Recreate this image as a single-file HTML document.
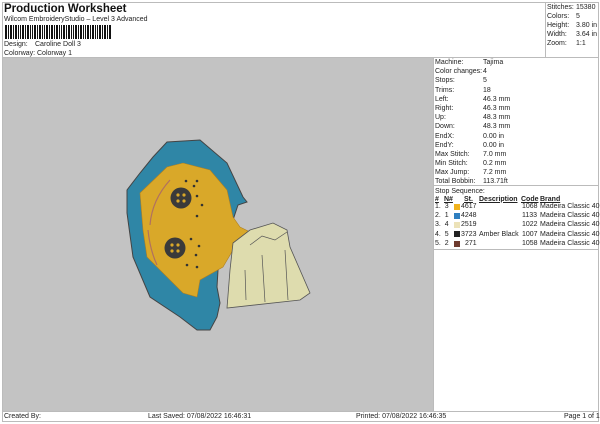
<!DOCTYPE html>
<html><head><meta charset="utf-8"><style>
*{margin:0;padding:0;box-sizing:border-box}
body{width:600px;height:424px;background:#fff;font-family:"Liberation Sans",Arial,sans-serif;color:#222;position:relative;overflow:hidden;font-size:7px}
.a{position:absolute;white-space:nowrap;line-height:9px}
.ln{position:absolute;background:#bbb}
</style></head><body>
<div class="ln" style="left:2px;top:2px;width:597px;height:1px"></div>
<div class="ln" style="left:2px;top:2px;width:1px;height:420px"></div>
<div class="ln" style="left:598px;top:2px;width:1px;height:420px"></div>
<div class="ln" style="left:2px;top:421px;width:597px;height:1px"></div>
<div class="ln" style="left:545px;top:2px;width:1px;height:55px"></div>
<div class="ln" style="left:2px;top:57px;width:597px;height:1px"></div>
<div class="ln" style="left:2px;top:411px;width:597px;height:1px"></div>
<div class="ln" style="left:433px;top:57px;width:1px;height:354px"></div>
<div class="ln" style="left:433px;top:185px;width:166px;height:1px"></div>
<div class="ln" style="left:433px;top:249px;width:166px;height:1px"></div>

<div class="a" style="left:4px;top:2px;font-size:11.5px;font-weight:bold;line-height:14px;color:#111">Production Worksheet</div>
<div class="a" style="left:4px;top:15px">Wilcom EmbroideryStudio – Level 3 Advanced</div>
<svg style="position:absolute;left:5px;top:25px" width="106" height="14">
<path fill="#111" d="M0 0h2v14H0zM3 0h1v14H3zM5 0h2v14H5zM8 0h1v14H8zM10 0h2v14h-2zM13 0h1v14h-1zM15 0h1v14h-1zM17 0h2v14h-2zM20 0h1v14h-1zM22 0h2v14h-2zM25 0h1v14h-1zM27 0h1v14h-1zM29 0h2v14h-2zM32 0h1v14h-1zM34 0h2v14h-2zM37 0h1v14h-1zM39 0h1v14h-1zM41 0h2v14h-2zM44 0h1v14h-1zM46 0h2v14h-2zM49 0h1v14h-1zM51 0h2v14h-2zM54 0h1v14h-1zM56 0h1v14h-1zM58 0h2v14h-2zM61 0h1v14h-1zM63 0h2v14h-2zM66 0h1v14h-1zM68 0h1v14h-1zM70 0h2v14h-2zM73 0h1v14h-1zM75 0h2v14h-2zM78 0h1v14h-1zM80 0h1v14h-1zM82 0h2v14h-2zM85 0h1v14h-1zM87 0h2v14h-2zM90 0h1v14h-1zM92 0h1v14h-1zM94 0h2v14h-2zM97 0h1v14h-1zM99 0h2v14h-2zM102 0h1v14h-1zM104 0h2v14h-2z"/>
</svg>
<div class="a" style="left:4px;top:40px">Design:</div><div class="a" style="left:35px;top:40px">Caroline Doll 3</div>
<div class="a" style="left:4px;top:49px">Colorway:</div><div class="a" style="left:37px;top:49px">Colorway 1</div>

<div class="a" style="left:547px;top:3px">Stitches:</div><div class="a" style="left:576px;top:3px">15380</div>
<div class="a" style="left:547px;top:12px">Colors:</div><div class="a" style="left:576px;top:12px">5</div>
<div class="a" style="left:547px;top:21px">Height:</div><div class="a" style="left:576px;top:21px">3.80 in</div>
<div class="a" style="left:547px;top:30px">Width:</div><div class="a" style="left:576px;top:30px">3.64 in</div>
<div class="a" style="left:547px;top:39px">Zoom:</div><div class="a" style="left:576px;top:39px">1:1</div>

<div style="position:absolute;left:3px;top:58px;width:430px;height:353px;background:#c3c3c3"></div>
<svg style="position:absolute;left:0;top:0" width="600" height="424">
<path d="M167 142 L200 140 L227 163 L243 197 L247 202 L238 205 L233 220 L228 250 L218 270 L217 287 L220 303 L217 317 L210 330 L197 330 L180 317 L150 297 L133 257 L127 213 L127 190 L140 173 L153 157 Z" fill="#2f86a6" stroke="#444" stroke-width="1"/>
<path d="M140 193 L167 167 L183 163 L210 170 L227 190 L233 217 L240 227 L260 237 L250 243 L233 250 L223 267 L200 280 L197 297 L183 293 L163 273 L147 257 L143 230 Z" fill="#d9a829" stroke="#b08020" stroke-width="0.6"/>
<path d="M233 243 L250 230 L273 223 L287 230 L290 247 L310 293 L300 300 L227 308 L230 270 Z" fill="#dedcae" stroke="#555" stroke-width="0.8"/>
<path d="M250 245 L262 236 L275 240 L287 232 M245 270 L246 300 M262 255 L265 302 M285 250 L288 300" stroke="#555" stroke-width="0.7" fill="none"/>
<path d="M170 180 Q152 200 150 225 M148 230 Q150 250 157 265" stroke="#b07060" stroke-width="1.2" fill="none"/>
<circle cx="181" cy="198" r="10.5" fill="#3a3a3a"/><circle cx="175" cy="248" r="10.5" fill="#3a3a3a"/>
<g fill="#d9a829"><circle cx="178" cy="195" r="1.6"/><circle cx="184" cy="195" r="1.6"/><circle cx="178" cy="201" r="1.6"/><circle cx="184" cy="201" r="1.6"/><circle cx="172" cy="245" r="1.6"/><circle cx="178" cy="245" r="1.6"/><circle cx="172" cy="251" r="1.6"/><circle cx="178" cy="251" r="1.6"/></g>
<g fill="#333"><circle cx="186" cy="181" r="1.3"/><circle cx="197" cy="181" r="1.3"/><circle cx="194" cy="186" r="1.3"/><circle cx="197" cy="196" r="1.3"/><circle cx="202" cy="205" r="1.3"/><circle cx="197" cy="216" r="1.3"/><circle cx="191" cy="239" r="1.3"/><circle cx="199" cy="246" r="1.3"/><circle cx="196" cy="255" r="1.3"/><circle cx="187" cy="265" r="1.3"/><circle cx="197" cy="267" r="1.3"/></g>
</svg>

<div class="a" style="left:435px;top:58px">Machine:</div><div class="a" style="left:483px;top:58px">Tajima</div>
<div class="a" style="left:435px;top:67.2px">Color changes:</div><div class="a" style="left:483px;top:67.2px">4</div>
<div class="a" style="left:435px;top:76.4px">Stops:</div><div class="a" style="left:483px;top:76.4px">5</div>
<div class="a" style="left:435px;top:85.6px">Trims:</div><div class="a" style="left:483px;top:85.6px">18</div>
<div class="a" style="left:435px;top:94.8px">Left:</div><div class="a" style="left:483px;top:94.8px">46.3 mm</div>
<div class="a" style="left:435px;top:104px">Right:</div><div class="a" style="left:483px;top:104px">46.3 mm</div>
<div class="a" style="left:435px;top:113.2px">Up:</div><div class="a" style="left:483px;top:113.2px">48.3 mm</div>
<div class="a" style="left:435px;top:122.4px">Down:</div><div class="a" style="left:483px;top:122.4px">48.3 mm</div>
<div class="a" style="left:435px;top:131.6px">EndX:</div><div class="a" style="left:483px;top:131.6px">0.00 in</div>
<div class="a" style="left:435px;top:140.8px">EndY:</div><div class="a" style="left:483px;top:140.8px">0.00 in</div>
<div class="a" style="left:435px;top:150px">Max Stitch:</div><div class="a" style="left:483px;top:150px">7.0 mm</div>
<div class="a" style="left:435px;top:159.2px">Min Stitch:</div><div class="a" style="left:483px;top:159.2px">0.2 mm</div>
<div class="a" style="left:435px;top:168.4px">Max Jump:</div><div class="a" style="left:483px;top:168.4px">7.2 mm</div>
<div class="a" style="left:435px;top:177px">Total Bobbin:</div><div class="a" style="left:483px;top:177px">113.71ft</div>
<div class="a" style="left:435px;top:186.5px">Stop Sequence:</div>
<div class="a" style="left:435px;top:194.5px;font-weight:bold;text-decoration:underline">#</div>
<div class="a" style="left:444px;top:194.5px;font-weight:bold;text-decoration:underline">N#</div>
<div class="a" style="left:464px;top:194.5px;font-weight:bold;text-decoration:underline">St.</div>
<div class="a" style="left:479px;top:194.5px;font-weight:bold;text-decoration:underline">Description</div>
<div class="a" style="left:521px;top:194.5px;font-weight:bold;text-decoration:underline">Code</div>
<div class="a" style="left:540px;top:194.5px;font-weight:bold;text-decoration:underline">Brand</div>

<div style="position:absolute;left:0;top:202px">
<div class="a" style="left:435px;top:0">1.&nbsp; 3</div><div style="position:absolute;left:454px;top:2px;width:6px;height:6px;background:#f1b31c"></div><div class="a" style="left:461px;top:0">4617</div><div class="a" style="left:522px;top:0">1068</div><div class="a" style="left:540px;top:0">Madeira Classic 40</div>
<div class="a" style="left:435px;top:9.2px">2.&nbsp; 1</div><div style="position:absolute;left:454px;top:11px;width:6px;height:6px;background:#2f7fc0"></div><div class="a" style="left:461px;top:9.2px">4248</div><div class="a" style="left:522px;top:9.2px">1133</div><div class="a" style="left:540px;top:9.2px">Madeira Classic 40</div>
<div class="a" style="left:435px;top:18.4px">3.&nbsp; 4</div><div style="position:absolute;left:454px;top:20px;width:6px;height:6px;background:#ece2b8"></div><div class="a" style="left:461px;top:18.4px">2519</div><div class="a" style="left:522px;top:18.4px">1022</div><div class="a" style="left:540px;top:18.4px">Madeira Classic 40</div>
<div class="a" style="left:435px;top:27.6px">4.&nbsp; 5</div><div style="position:absolute;left:454px;top:29px;width:6px;height:6px;background:#222"></div><div class="a" style="left:461px;top:27.6px">3723</div><div class="a" style="left:479px;top:27.6px">Amber Black</div><div class="a" style="left:522px;top:27.6px">1007</div><div class="a" style="left:540px;top:27.6px">Madeira Classic 40</div>
<div class="a" style="left:435px;top:36.8px">5.&nbsp; 2</div><div style="position:absolute;left:454px;top:38.5px;width:6px;height:6px;background:#6e3b2e"></div><div class="a" style="left:465px;top:36.8px">271</div><div class="a" style="left:522px;top:36.8px">1058</div><div class="a" style="left:540px;top:36.8px">Madeira Classic 40</div>
</div>

<div class="a" style="left:4px;top:412px">Created By:</div>
<div class="a" style="left:148px;top:412px">Last Saved: 07/08/2022 16:46:31</div>
<div class="a" style="left:356px;top:412px">Printed: 07/08/2022 16:46:35</div>
<div class="a" style="left:564px;top:412px">Page 1 of 1</div>
</body></html>
